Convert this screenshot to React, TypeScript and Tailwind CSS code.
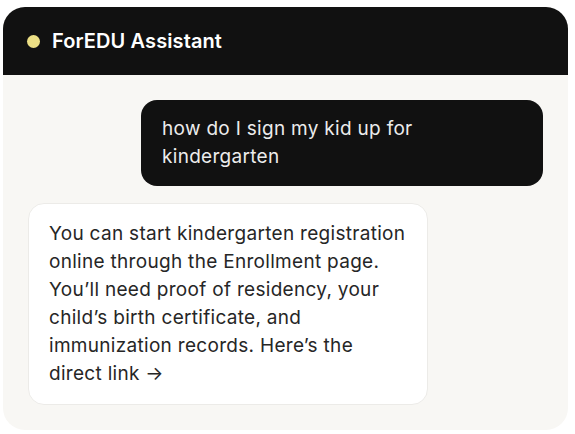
export default function App() {
  return (
    <div className="w-[575px] h-[434px] bg-white pt-[7px] pl-[3px]" style={{ fontFamily: "Inter, 'Noto Sans', sans-serif" }}>
      <div className="w-[565px] h-[423px] rounded-[22px] bg-[#f8f7f4] overflow-hidden flex flex-col">
        <div className="h-[68px] bg-[#111111] flex items-center pl-[24px] gap-[12px] shrink-0">
          <span className="w-[13px] h-[13px] rounded-full bg-[#ecdf85]" />
          <span className="text-white text-[20px] font-semibold tracking-[0.1px]">ForEDU Assistant</span>
        </div>
        <div className="flex flex-col pt-[25px] px-[25px]">
          <div className="self-end w-[402px] h-[86px] rounded-[16px] bg-[#111111] px-[21px] py-[15px] text-[19px] leading-[28px] tracking-[0.3px] text-[#ececec]">
            how do I sign my kid up for kindergarten
          </div>
          <div className="mt-[17px] w-[400px] h-[202px] rounded-[16px] bg-white border border-[#ecebe8] px-[20px] py-[16px] text-[19px] leading-[28px] tracking-[0.3px] text-[#262626]">
            You can start kindergarten registration online through the Enrollment page. You’ll need proof of residency, your child’s birth certificate, and immunization records. Here’s the direct link →
          </div>
        </div>
      </div>
    </div>
  );
}
